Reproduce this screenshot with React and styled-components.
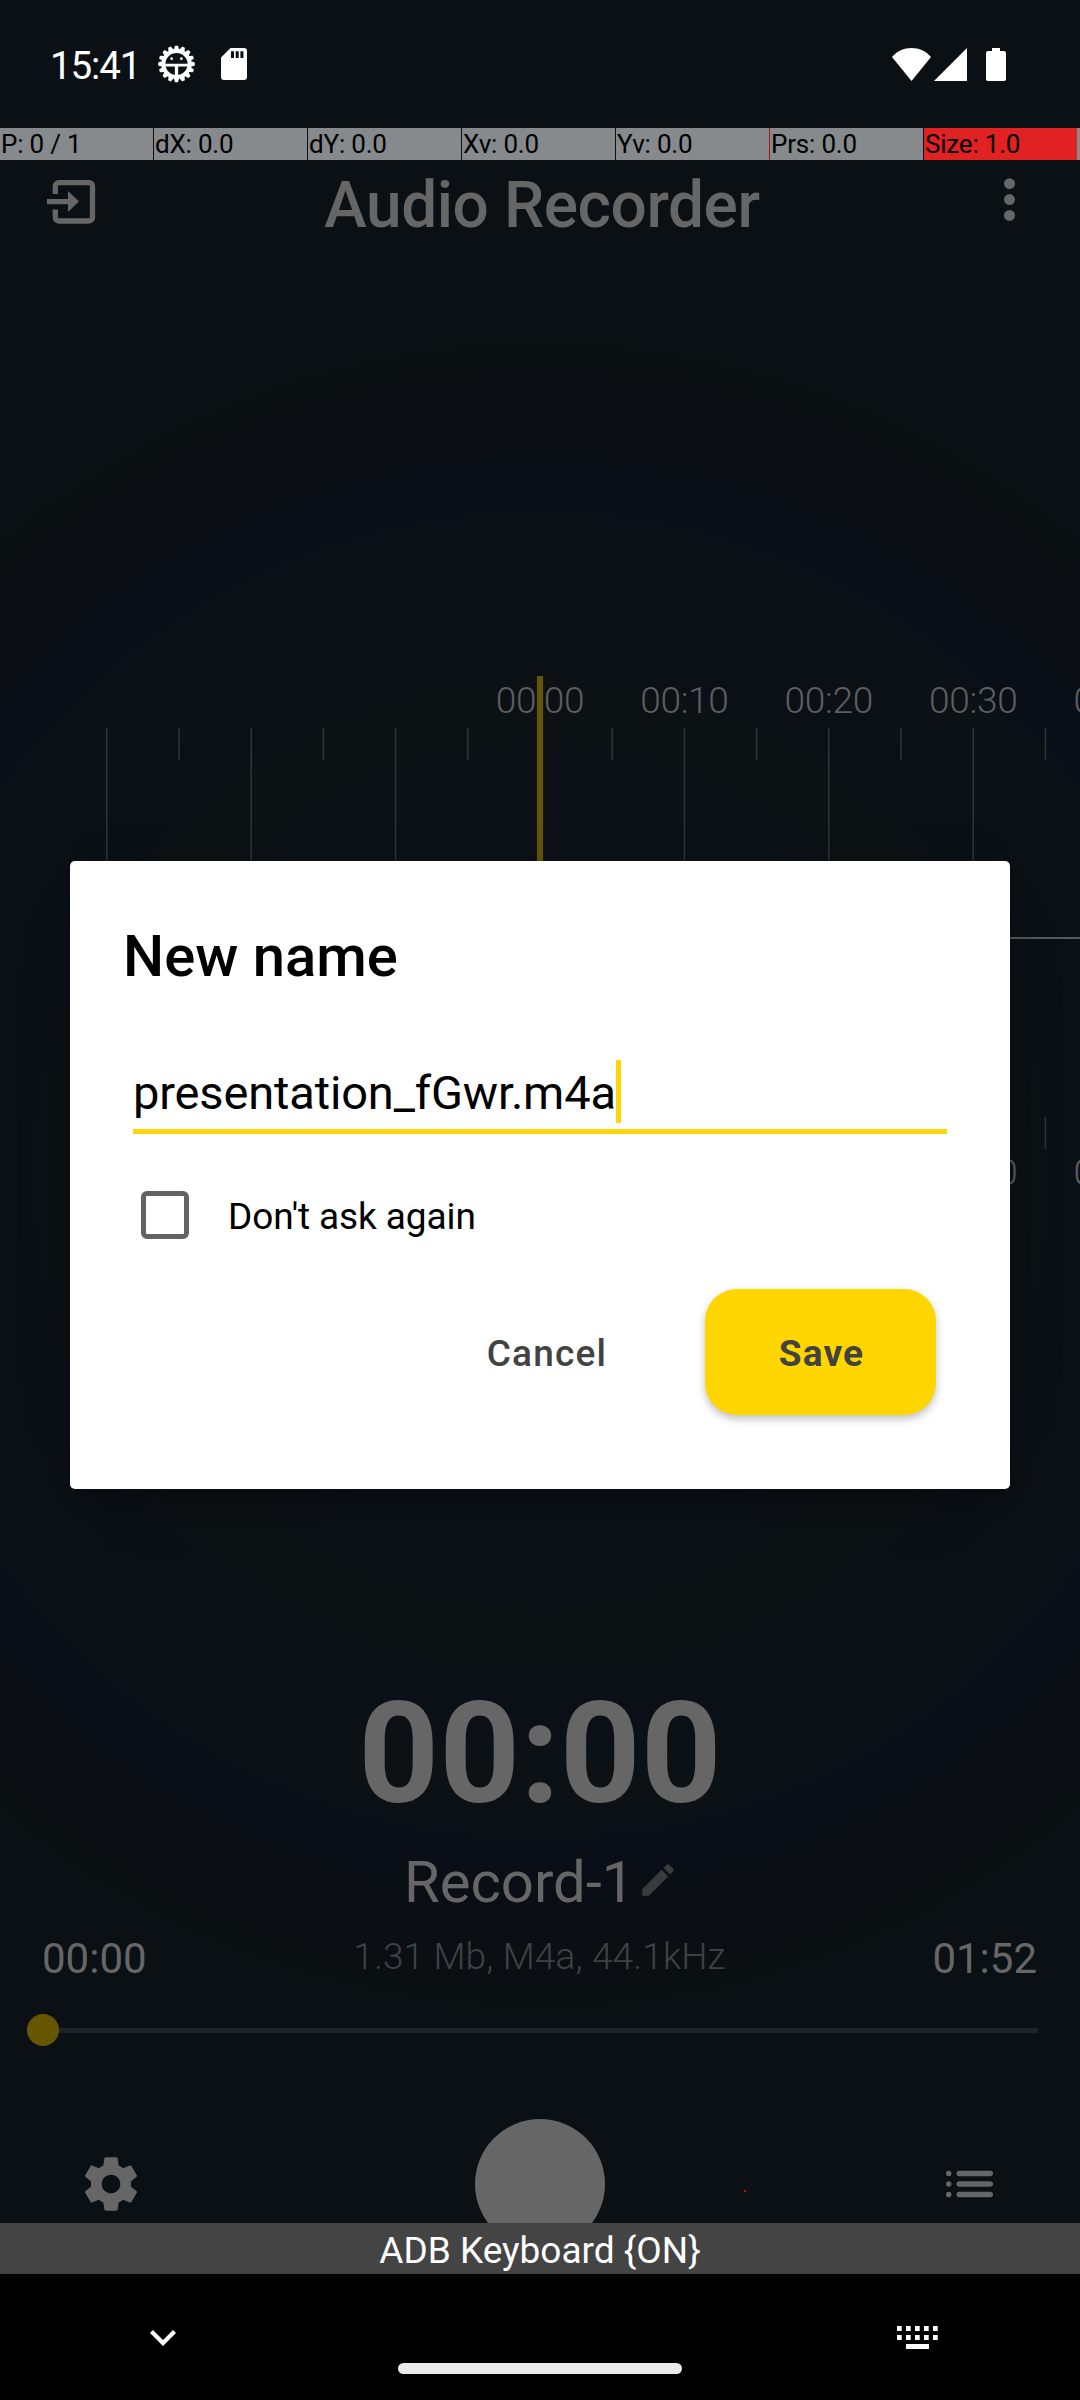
import React from "react";
import styled, { createGlobalStyle } from "styled-components";

const Global = createGlobalStyle`
  * { box-sizing: border-box; }
  body { margin: 0; background: #000; font-family: Roboto, "Liberation Sans", sans-serif; }
  svg { display: block; flex: none; }
`;

const Screen = styled.div`
  position: relative;
  display: flex;
  flex-direction: column;
  width: 1080px;
  height: 2400px;
  overflow: hidden;
  background: radial-gradient(
    circle at 540px 1176px,
    #0d1118 0, #0c1118 400px, #0c1114 440px, #0c1114 490px, #0b1017 520px, #0b1017 550px,
    #0b1114 600px, #0b1114 640px, #0a0f17 670px, #0a0f17 700px, #0b0e12 760px, #0a1013 860px
  );
`;

const StatusBar = styled.div`
  display: flex;
  align-items: center;
  height: 128px;
  padding: 0 74px 0 50px;
  color: #fff;
`;
const Clock = styled.div`
  width: 108px;
  font-size: 38.5px;
  line-height: 44px;
  padding-top: 4px;
  letter-spacing: -1.1px;
`;
const StatusIcons = styled.div`
  display: flex;
  flex: 1;
  align-items: center;
  gap: 26px;
`;
const SystemIcons = styled.div`
  display: flex;
  align-items: center;
  svg:last-child { margin-left: 19px; }
  svg:nth-child(2) { margin-left: 3px; }
`;

const PointerBar = styled.div`
  display: flex;
  flex: none;
  gap: 1px;
  height: 32px;
`;
const PointerCell = styled.div`
  flex: none;
  width: 153px;
  padding-left: 1px;
  font-size: 26px;
  line-height: 32px;
  letter-spacing: -0.2px;
  white-space: nowrap;
  color: #000;
  background: ${(p) => (p.$alert ? "#e02222" : "#868a8c")};
  box-shadow: ${(p) => (p.$mark ? "1px 0 0 #a01818" : "none")};
`;
const PointerRest = styled.div`
  flex: 1;
  margin-left: -1px;
  background: #868a8c;
`;

const AppBody = styled.main`
  display: flex;
  flex: none;
  flex-direction: column;
  height: 2063px;
  overflow: hidden;
  color: #666;
`;
const Header = styled.header`
  display: flex;
  flex: none;
  align-items: center;
  justify-content: space-between;
  height: 80px;
  padding: 0 64px 0 46px;
`;
const AppTitle = styled.h1`
  margin: 0;
  padding: 12px 16px 0 0;
  font-size: 64px;
  line-height: 70px;
  font-weight: 500;
  letter-spacing: -0.45px;
`;
const Wave = styled.svg`
  margin-top: 436px;
  font-family: Roboto, sans-serif;
`;
const Timer = styled.div`
  margin-top: 474px;
  text-align: center;
  font-size: 141px;
  line-height: 160px;
  font-weight: 700;
`;
const NameRow = styled.div`
  display: flex;
  flex: none;
  align-items: center;
  gap: 3px;
  height: 70px;
  margin-top: 13px;
  padding-left: 404px;
  svg { margin-bottom: 5px; }
`;
const RecordName = styled.div`
  font-size: 58px;
  line-height: 70px;
`;
const InfoRow = styled.div`
  display: flex;
  flex: none;
  align-items: center;
  justify-content: space-between;
  height: 50px;
  margin-top: 17px;
  padding: 0 43px 0 42px;
`;
const Time = styled.div`
  font-size: 42px;
  line-height: 50px;
`;
const Info = styled.div`
  padding-bottom: 4px;
  font-size: 37px;
  line-height: 44px;
  font-weight: 300;
  letter-spacing: 0.15px;
  color: #3f4244;
`;
const Slider = styled.div`
  display: flex;
  flex: none;
  align-items: center;
  height: 32px;
  margin: 30px 42px 0 26.5px;
`;
const Thumb = styled.div`
  width: 32px;
  height: 32px;
  border-radius: 50%;
  background: #665600;
`;
const Track = styled.div`
  flex: 1;
  height: 5px;
  background: #1f2327;
`;
const Controls = styled.div`
  display: flex;
  flex: none;
  align-items: center;
  justify-content: space-between;
  height: 130px;
  margin-top: 73px;
  padding: 0 87px 0 79px;
`;
const RecordButton = styled.div`
  width: 130px;
  height: 130px;
  margin-left: -10px;
  border-radius: 50%;
  background: #666;
`;
const TouchDot = styled.div`
  position: absolute;
  left: 744px;
  top: 2190px;
  width: 2px;
  height: 2px;
  background: #c01010;
`;

const ImeBar = styled.div`
  flex: none;
  height: 51px;
  text-align: center;
  font-size: 37px;
  line-height: 56px;
  color: #fff;
  background: #444;
`;
const NavBar = styled.div`
  display: grid;
  grid-template-columns: 1fr 284px 1fr;
  flex: 1;
  background: #000;
`;
const NavSlot = styled.div`
  display: flex;
  justify-content: ${(p) => (p.$end ? "flex-end" : "flex-start")};
  padding: ${(p) => (p.$end ? "52px 142px 0 0" : "55px 0 0 149px")};
`;
const HomePill = styled.div`
  height: 11px;
  margin-top: 89px;
  border-radius: 6px;
  background: #ebebeb;
`;

const Dialog = styled.section`
  position: absolute;
  left: 70px;
  top: 861px;
  display: flex;
  flex-direction: column;
  width: 940px;
  height: 628px;
  padding: 60px 63px 0;
  border-radius: 5px;
  color: #000;
  background: #fff;
  box-shadow: 0 16px 50px rgba(0, 0, 0, 0.3);
`;
const DialogTitle = styled.h2`
  margin: 0 0 0 -10px;
  font-size: 58px;
  line-height: 70px;
  font-weight: 500;
`;
const Field = styled.div`
  display: flex;
  height: 79px;
  margin-top: 64px;
  border-bottom: 5px solid #ffd60a;
  font-size: 47px;
  line-height: 76px;
  letter-spacing: -0.15px;
`;
const Caret = styled.div`
  width: 5px;
  height: 63px;
  margin: 5px 0 0 0;
  background: #ffd60a;
`;
const CheckRow = styled.label`
  display: flex;
  align-items: center;
  height: 48px;
  margin-top: 57px;
  padding-left: 8px;
  gap: 39px;
  font-size: 37px;
  letter-spacing: -0.1px;
`;
const CheckText = styled.span`
  padding-top: 2px;
`;
const Box = styled.span`
  width: 48px;
  height: 48px;
  border: 5px solid #636363;
  border-radius: 6px;
`;
const Actions = styled.div`
  display: flex;
  justify-content: flex-end;
  margin-top: 50px;
  padding-right: 11px;
  gap: 62px;
`;
const Button = styled.button`
  width: ${(p) => (p.$primary ? "231px" : "194px")};
  height: 126px;
  padding: 2px 0 0 2px;
  border: 0;
  border-radius: 32px;
  font: ${(p) => (p.$primary ? 700 : 500)} 37px Roboto, sans-serif;
  letter-spacing: 1.2px;
  color: #424242;
  background: ${(p) => (p.$primary ? "#ffd600" : "transparent")};
  box-shadow: ${(p) => (p.$primary ? "0 4px 8px rgba(0,0,0,.25)" : "none")};
`;

const teeth = Array.from({ length: 16 }, (_, i) => i * 22.5);
const DebugIcon = () => (
  <svg width="37" height="38" viewBox="-19 -19 38 38">
    {teeth.map((a) => (
      <path key={a} d="M-3 -14 L-1.5 -18.8 H1.5 L3 -14Z" fill="#fff" transform={`rotate(${a})`} />
    ))}
    <circle r="13.4" fill="none" stroke="#fff" strokeWidth="4" />
    <path d="M-12 -0.300H12V2.600H1.700V13H-1.700V2.600H-12Z" fill="#fff" />
    <circle cx="-5" cy="-5.500" r="1.400" fill="#fff" />
    <circle cx="5" cy="-5.500" r="1.400" fill="#fff" />
  </svg>
);
const SdIcon = () => (
  <svg width="26" height="32" viewBox="0 0 26 32">
    <path fillRule="evenodd" fill="#fff" d="M9.5 0H23a3 3 0 0 1 3 3V29a3 3 0 0 1-3 3H3a3 3 0 0 1-3-3V9.5ZM10 3.3V10h3V3.3ZM14.7 3.3V10h3V3.3ZM19.4 3.3V10h3V3.3Z" />
  </svg>
);
const WifiIcon = () => (
  <svg width="39" height="33" viewBox="0 0 39 33"><path fill="#fff" d="M19.5 33L0 9C5 3 12 0 19.500 0S34 3 39 9Z" /></svg>
);
const SignalIcon = () => (
  <svg width="33" height="33" viewBox="0 0 33 33"><path fill="#fff" d="M33 0V33H0Z" /></svg>
);
const BatteryIcon = () => (
  <svg width="20" height="33" viewBox="0 0 20 33"><path fill="#fff" d="M6 0H14V3H18a2 2 0 0 1 2 2V31a2 2 0 0 1-2 2H2a2 2 0 0 1-2-2V5a2 2 0 0 1 2-2H6Z" /></svg>
);
const ImportIcon = () => (
  <svg width="50" height="47" viewBox="0 -3 50 47">
    <path fill="none" stroke="#666" strokeWidth="5.300" d="M9.300 14V6.200A3.500 3.500 0 0 1 12.800 2.700H43A3.500 3.500 0 0 1 46.500 6.200V37.500A3.500 3.500 0 0 1 43 41H12.800A3.500 3.500 0 0 1 9.300 37.500V29.500" />
    <path fill="#666" d="M1 19H22V11L33 21.600L22 32V24.300H1Z" />
  </svg>
);
const DotsIcon = () => (
  <svg width="12" height="44" viewBox="0 0 12 44" fill="#666">
    <circle cx="5.500" cy="5.700" r="5.500" /><circle cx="5.500" cy="21.600" r="5.500" /><circle cx="5.500" cy="37.400" r="5.500" />
  </svg>
);
const PencilIcon = () => (
  <svg width="42" height="42" viewBox="0 0 24 24" fill="#3a3b3d">
    <path d="M3 17.250V21h3.750L17.810 9.940l-3.750-3.750L3 17.250zM20.710 7.040c.39-.39.39-1.020 0-1.410l-2.340-2.340a1 1 0 0 0-1.410 0l-1.830 1.830 3.750 3.750 1.830-1.830z" />
  </svg>
);
const GearIcon = () => (
  <svg width="64" height="64" viewBox="0 0 24 24" fill="#666">
    <path d="M19.430 12.980c.04-.32.07-.64.07-.98s-.03-.66-.07-.98l2.110-1.650c.19-.15.24-.42.12-.64l-2-3.460c-.12-.22-.39-.3-.61-.22l-2.490 1c-.52-.4-1.080-.73-1.690-.98l-.38-2.650A.488.488 0 0 0 14 2h-4c-.25 0-.46.18-.49.42l-.38 2.650c-.61.25-1.170.59-1.690.98l-2.490-1c-.23-.09-.49 0-.61.22l-2 3.460c-.13.22-.07.49.12.64l2.110 1.650c-.04.32-.07.65-.07.98s.03.66.07.98l-2.110 1.650c-.19.15-.24.42-.12.64l2 3.460c.12.22.39.3.61.22l2.490-1c.52.4 1.080.73 1.690.98l.38 2.650c.03.24.24.42.49.42h4c.25 0 .46-.18.49-.42l.38-2.650c.61-.25 1.170-.59 1.690-.98l2.490 1c.23.09.49 0 .61-.22l2-3.460c.12-.22.07-.49-.12-.64l-2.110-1.650zM12 15.500c-1.930 0-3.500-1.570-3.500-3.500s1.570-3.500 3.500-3.500 3.500 1.570 3.500 3.500-1.570 3.500-3.500 3.500z" />
  </svg>
);
const ListIcon = () => (
  <svg width="47" height="28" viewBox="0 0 47 28" fill="#666">
    {[3.5, 14, 24.5].map((y) => (
      <g key={y}>
        <circle cx="2.700" cy={y} r="2.700" />
        <rect x="10.500" y={y - 2.8} width="36.500" height="5.600" rx="2.800" />
      </g>
    ))}
  </svg>
);
const ChevronIcon = () => (
  <svg width="28" height="18" viewBox="0 0 28 18"><path d="M2.500 2.500L14 14L25.500 2.500" fill="none" stroke="#fff" strokeWidth="4.200" /></svg>
);
const KeyboardIcon = () => (
  <svg width="41" height="24" viewBox="0 0 41 24" fill="#fff">
    {[0, 9, 18, 27, 36].map((x) => (
      <g key={x}><rect x={x} width="4.700" height="5" /><rect x={x} y="9" width="4.700" height="5" /></g>
    ))}
    <rect x="9" y="18" width="23" height="5" />
  </svg>
);

const STEP = 144.4;
const labels = ["00:00", "00:10", "00:20", "00:30", "00:40"];
const Waveform = () => (
  <Wave width="1080" height="524" viewBox="0 0 1080 524">
    {[-3, -2, -1, 0, 1, 2, 3].map((k) => (
      <g key={k} fill="#2f3235">
        <rect x={539.2 + k * STEP} y="52" width="1.600" height="421" />
        <rect x={611.4 + k * STEP} y="52" width="1.600" height="32" />
        <rect x={611.4 + k * STEP} y="441" width="1.600" height="32" />
      </g>
    ))}
    <rect x="540" y="261" width="540" height="2" fill="#58595b" />
    <g fill="#5c5e60" fontSize="37" fontWeight="300" letterSpacing="-0.3" textAnchor="middle">
      {labels.map((t, i) => (
        <React.Fragment key={t}>
          <text x={540 + i * STEP} y="37">{t}</text>
          <text x={540 + i * STEP} y="508.500">{t}</text>
        </React.Fragment>
      ))}
    </g>
    <rect x="537" width="6" height="524" fill="#665600" />
  </Wave>
);

const pointers = ["P: 0 / 1", "dX: 0.0", "dY: 0.0", "Xv: 0.0", "Yv: 0.0", "Prs: 0.0", "Size: 1.0"];

export default function App() {
  return (
    <Screen>
      <Global />
      <StatusBar>
        <Clock>15:41</Clock>
        <StatusIcons><DebugIcon /><SdIcon /></StatusIcons>
        <SystemIcons><WifiIcon /><SignalIcon /><BatteryIcon /></SystemIcons>
      </StatusBar>
      <PointerBar>
        {pointers.map((t, i) => (
          <PointerCell key={t} $alert={i === 6} $mark={i === 4}>{t}</PointerCell>
        ))}
        <PointerRest />
      </PointerBar>
      <AppBody>
        <Header><ImportIcon /><AppTitle>Audio Recorder</AppTitle><DotsIcon /></Header>
        <Waveform />
        <Timer>00:00</Timer>
        <NameRow><RecordName>Record-1</RecordName><PencilIcon /></NameRow>
        <InfoRow><Time>00:00</Time><Info>1.31 Mb, M4a, 44.1kHz</Info><Time>01:52</Time></InfoRow>
        <Slider><Thumb /><Track /></Slider>
        <Controls><GearIcon /><RecordButton /><ListIcon /></Controls>
      </AppBody>
      <ImeBar>ADB Keyboard {"{ON}"}</ImeBar>
      <NavBar>
        <NavSlot><ChevronIcon /></NavSlot>
        <HomePill />
        <NavSlot $end><KeyboardIcon /></NavSlot>
      </NavBar>
      <TouchDot />
      <Dialog>
        <DialogTitle>New name</DialogTitle>
        <Field><span>presentation_fGwr.m4a</span><Caret /></Field>
        <CheckRow><Box /><CheckText>Don't ask again</CheckText></CheckRow>
        <Actions><Button>Cancel</Button><Button $primary>Save</Button></Actions>
      </Dialog>
    </Screen>
  );
}
